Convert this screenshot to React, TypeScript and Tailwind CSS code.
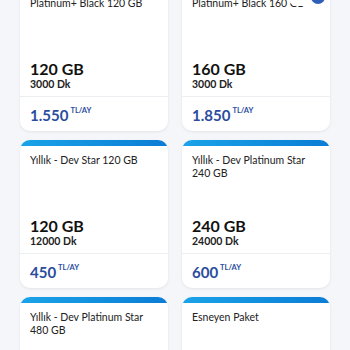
const packages = [
  { title: "Platinum+ Black 120 GB", gb: "120 GB", dk: "3000 Dk", price: "1.550", bar: false, badge: false },
  { title: "Platinum+ Black 160 GB", gb: "160 GB", dk: "3000 Dk", price: "1.850", bar: false, badge: true },
  { title: "Yıllık - Dev Star 120 GB", gb: "120 GB", dk: "12000 Dk", price: "450", bar: true, badge: false },
  { title: "Yıllık - Dev Platinum Star 240 GB", gb: "240 GB", dk: "24000 Dk", price: "600", bar: true, badge: false },
  { title: "Yıllık - Dev Platinum Star 480 GB", gb: "480 GB", dk: "48000 Dk", price: "900", bar: true, badge: false },
  { title: "Esneyen Paket", gb: "20 GB", dk: "1000 Dk", price: "250", bar: true, badge: false },
];

export default function App() {
  return (
    <div
      className="w-[350px] h-[350px] overflow-hidden bg-[#f4f6f9]"
      style={{ fontFamily: "Lato, 'Open Sans', sans-serif" }}
    >
      <div className="grid grid-cols-2 gap-x-[14px] gap-y-[9px] px-[20px] -mt-[17px]">
        {packages.map((p) => (
          <div
            key={p.title}
            className="relative h-[148px] flex flex-col bg-white rounded-[10px] shadow-[0_1px_3px_rgba(0,0,0,0.08)] overflow-hidden"
          >
            {p.bar ? (
              <div className="h-[6px] bg-gradient-to-r from-[#1ba3e8] to-[#0b7cd5]" />
            ) : (
              <div className="h-[6px]" />
            )}
            <div className="flex-1 flex flex-col justify-between px-[10px] pt-[8px] pb-[5px]">
              <div className="text-[10.5px] leading-[13px] text-[#222] pr-[6px]">{p.title}</div>
              <div>
                <div className="text-[16px] leading-[17px] font-bold text-[#111]">{p.gb}</div>
                <div className="text-[10.5px] leading-[13px] font-bold text-[#222] mt-[1px]">{p.dk}</div>
              </div>
            </div>
            <div className="h-[35px] border-t border-[#eceef1] px-[10px] flex items-center">
              <span className="text-[15px] leading-[16px] font-bold text-[#2a4d9e] mt-[1px]">{p.price}</span>
              <span className="text-[7.5px] font-bold text-[#2a4d9e] ml-[2px] self-start mt-[8px]">TL/AY</span>
            </div>
            {p.badge && (
              <div className="absolute left-[106px] top-[5px] w-[40px] h-[18px] rounded-full bg-white flex items-center justify-end pr-[3px]">
                <div className="w-[14px] h-[14px] rounded-full bg-[#2f5db8]" />
              </div>
            )}
          </div>
        ))}
      </div>
    </div>
  );
}
